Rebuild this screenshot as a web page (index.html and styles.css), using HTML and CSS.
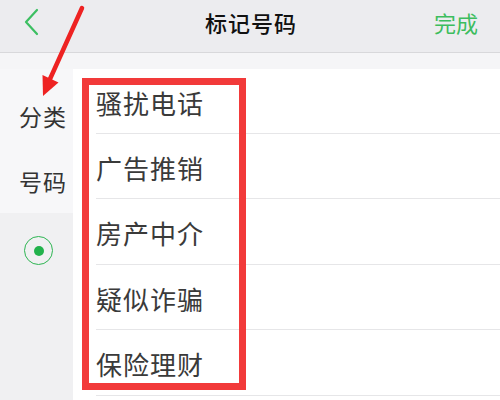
FILE: index.html
```html
<!DOCTYPE html>
<html lang="zh-CN">
<head>
  <meta charset="UTF-8">
  <meta name="viewport" content="width=device-width, initial-scale=1.0">
  <title>标记号码</title>
  <link rel="stylesheet" href="styles.css">
</head>
<body>
  <div class="screen">
    <div class="header">
      <span class="back">
        <svg width="16" height="28" viewBox="0 0 16 28"><polyline points="13,2 2,14 13,26" fill="none" stroke="#3cbf62" stroke-width="2.2" stroke-linecap="round" stroke-linejoin="round"/></svg>
      </span>
      <h1 class="title">标记号码</h1>
      <span class="done">完成</span>
    </div>
    <div class="band"></div>

    <div class="content">
      <div class="side">
        <div class="side-tabs">
          <div class="side-item">分类</div>
          <div class="side-item">号码</div>
        </div>
        <div class="side-rest">
          <span class="radio"><span class="radio-dot"></span></span>
        </div>
      </div>
      <ul class="list">
        <li class="row">骚扰电话</li>
        <li class="row">广告推销</li>
        <li class="row">房产中介</li>
        <li class="row">疑似诈骗</li>
        <li class="row">保险理财</li>
      </ul>
    </div>

    <!-- annotation overlay -->
    <div class="mark-box"></div>
    <svg class="mark-arrow" width="100" height="110" viewBox="0 0 100 110">
      <line x1="82" y1="8" x2="50" y2="79" stroke="#ee2222" stroke-width="4.5" stroke-linecap="round"/>
      <polygon points="43,96 58.5,82.5 42.5,75" fill="#ee2222"/>
    </svg>
  </div>
</body>
</html>
```

FILE: styles.css
```css
* {
  box-sizing: border-box;
}

body {
  margin: 0;
  font-family: "Noto Sans CJK SC", "Noto Sans", sans-serif;
  background: #ffffff;
  color: #333;
}

.screen {
  position: relative;
  width: 500px;
  height: 400px;
  overflow: hidden;
}

.header {
  height: 53px;
  background: #ececef;
  border-bottom: 1px solid #d8d8db;
  display: grid;
  grid-template-columns: 1fr auto 1fr;
  align-items: center;
  padding: 0 22px 8px 24px;
}

.back {
  display: flex;
  width: 16px;
  height: 28px;
}

.title {
  margin: 0;
  text-align: center;
  font-size: 22px;
  font-weight: 500;
  letter-spacing: 1px;
  color: #111;
}

.done {
  justify-self: end;
  font-size: 22px;
  color: #3dbd5e;
}

.band {
  height: 16px;
  background: #f5f5f7;
}

.content {
  display: flex;
  height: 331px;
}

.side {
  width: 73px;
  display: flex;
  flex-direction: column;
}

.side-tabs {
  background: #f7f7f9;
  padding: 14px 0 0 13px;
  height: 144px;
}

.side-item {
  height: 65px;
  display: flex;
  align-items: center;
  justify-content: center;
  font-size: 23px;
  letter-spacing: 1px;
  color: #333;
}

.side-rest {
  flex: 1;
  background: #f0f0f2;
  display: flex;
  justify-content: center;
  padding: 23px 0 0 4px;
}

.radio {
  width: 29px;
  height: 29px;
  border: 1.5px solid #2db552;
  border-radius: 50%;
  display: flex;
  align-items: center;
  justify-content: center;
}

.radio-dot {
  width: 10px;
  height: 10px;
  border-radius: 50%;
  background: #22b24c;
}

.list {
  flex: 1;
  margin: 0;
  padding: 0 0 0 23px;
  list-style: none;
  background: #ffffff;
}

.row {
  height: 65.5px;
  border-bottom: 1px solid #e6e6e8;
  display: flex;
  align-items: center;
  padding-top: 3px;
  font-size: 26px;
  letter-spacing: 1px;
  color: #3a3a3a;
}

.row:first-child {
  height: 64.5px;
}

.mark-box {
  position: absolute;
  left: 82px;
  top: 78px;
  width: 164px;
  height: 312px;
  border: 7px solid #f23a3a;
}

.mark-arrow {
  position: absolute;
  left: 0;
  top: 0;
}
```
